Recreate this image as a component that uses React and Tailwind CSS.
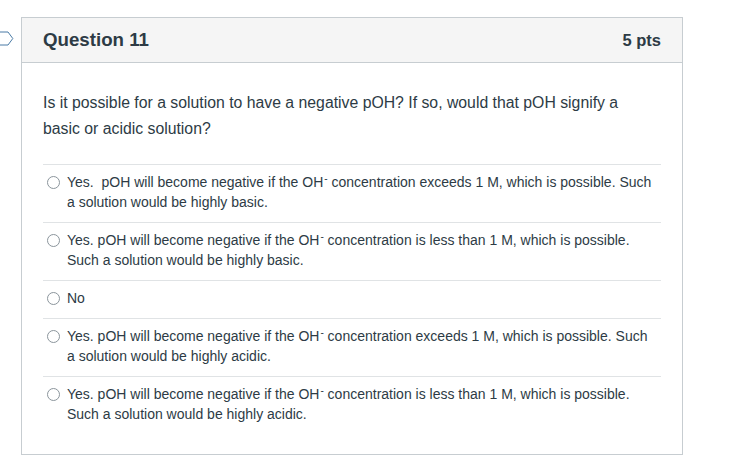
import React from "react";

const OH = () => (
  <>
    OH<sup className="text-[10px] ml-[1px]">-</sup>
  </>
);

const options = [
  <>Yes.{"\u00a0"} pOH will become negative if the <OH /> concentration exceeds 1 M, which is possible. Such a solution would be highly basic.</>,
  <>Yes. pOH will become negative if the <OH /> concentration is less than 1 M, which is possible. Such a solution would be highly basic.</>,
  <>No</>,
  <>Yes. pOH will become negative if the <OH /> concentration exceeds 1 M, which is possible. Such a solution would be highly acidic.</>,
  <>Yes. pOH will become negative if the <OH /> concentration is less than 1 M, which is possible. Such a solution would be highly acidic.</>,
];

export default function App() {
  return (
    <div className="w-[751px] h-[458px] bg-white relative text-[#2d3b45]" style={{ fontFamily: '"Liberation Sans", Arial, sans-serif' }}>
      <svg className="absolute left-0 top-[31px]" width="14" height="15" viewBox="0 0 14 15">
        <path d="M-2 1 H8 L12.8 7.5 L8 14 H-2" fill="none" stroke="#4a7ba6" strokeWidth="1" />
      </svg>
      <div className="pt-[17px] pl-[21px]">
        <div className="w-[662px] h-[438px] border border-[#c7cdd1] flex flex-col">
          <div className="h-[45px] bg-[#f5f5f5] border-b border-[#c7cdd1] flex items-center justify-between px-[21px]">
            <span className="text-[18.7px] font-bold">Question 11</span>
            <span className="text-[16.5px] font-bold text-[#2d3b45]">5 pts</span>
          </div>
          <div className="px-[21px] pt-[27px]">
            <p className="text-[15.8px] leading-[26px] pr-[20px]">
              Is it possible for a solution to have a negative pOH? If so, would that pOH signify a basic or acidic solution?
            </p>
            <div className="mt-[22px]">
              {options.map((o, i) => (
                <div key={i} className="border-t border-[#e0e3e5] flex items-start pl-[4px] pt-[7px] pb-[10px]">
                  <span className="mt-[4px] w-[13px] h-[13px] rounded-full border border-[#8b959c] bg-white shrink-0" />
                  <span className="ml-[7px] text-[14px] leading-[20px] pr-[8px]">{o}</span>
                </div>
              ))}
            </div>
          </div>
        </div>
      </div>
    </div>
  );
}
